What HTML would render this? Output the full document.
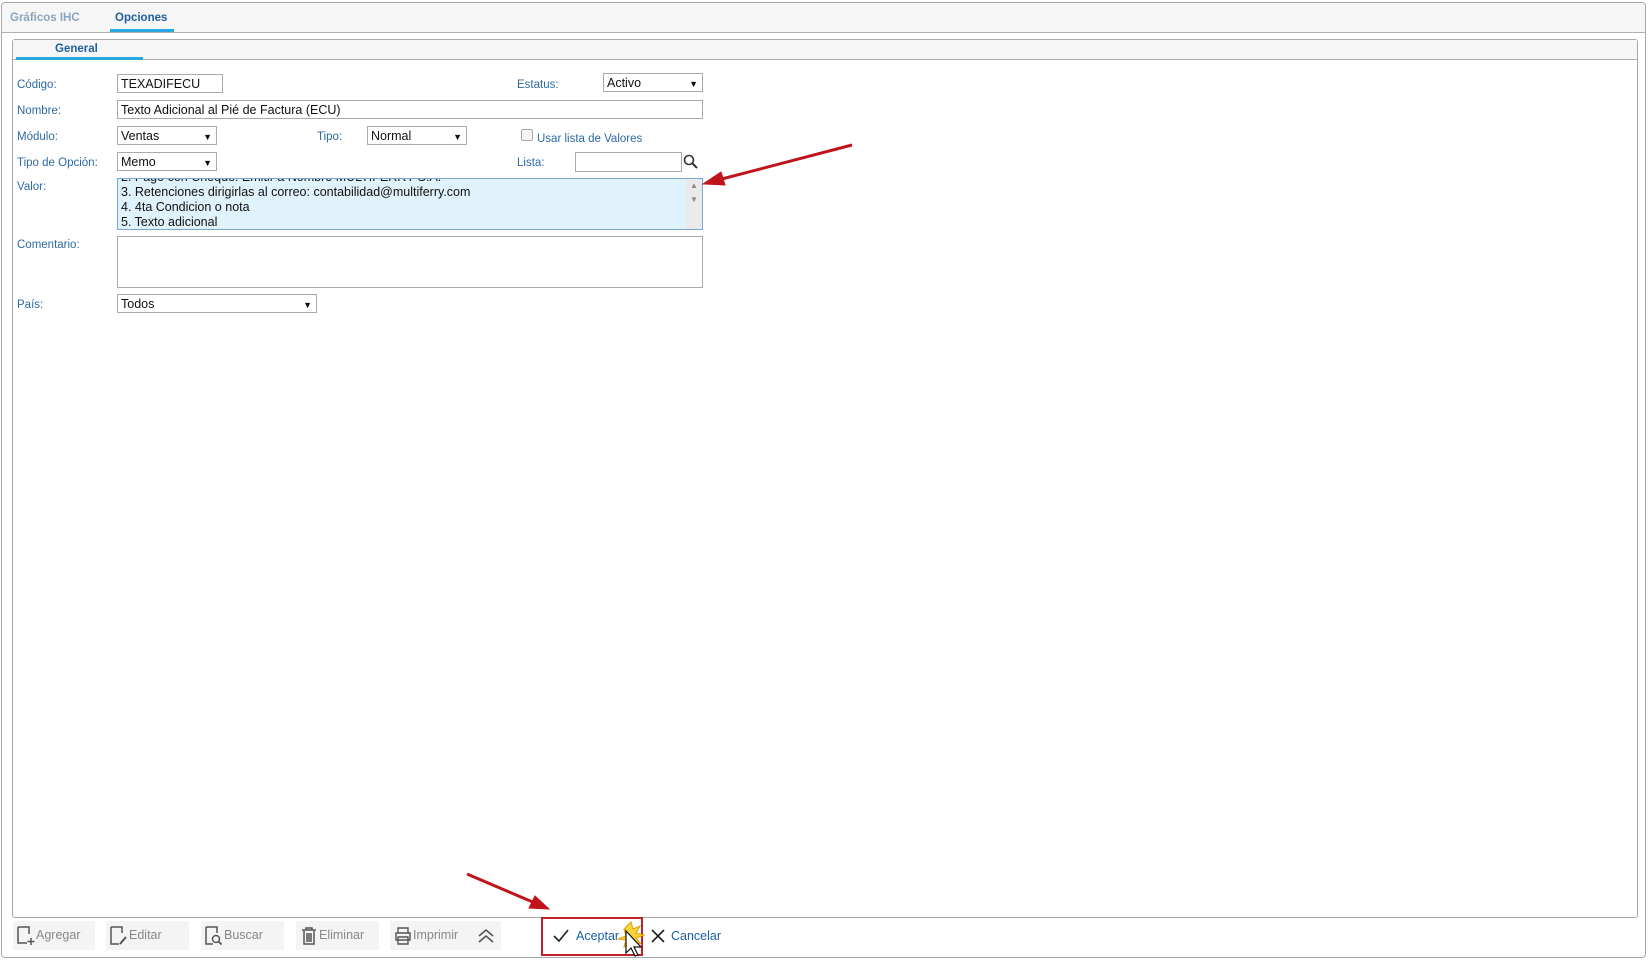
<!DOCTYPE html>
<html><head><meta charset="utf-8"><style>
*{box-sizing:border-box;margin:0;padding:0}
body{width:1650px;height:961px;background:#fff;font-family:"Liberation Sans","DejaVu Sans",sans-serif;position:relative;overflow:hidden}
.a{position:absolute}
.outer{left:1px;top:2px;width:1645px;height:956px;border:1px solid #a8a8a8;border-radius:4px;background:#fff}
.ohead{left:2px;top:3px;width:1643px;height:30px;background:#f6f6f6;border-bottom:1px solid #b0b0b0;border-radius:4px 4px 0 0}
.inner{left:12px;top:39px;width:1626px;height:879px;border:1px solid #a8a8a8;border-radius:3px}
.ihead{left:13px;top:40px;width:1624px;height:20px;background:#f6f6f6;border-bottom:1px solid #b0b0b0}
.lbl{font-size:11.5px;color:#2d6aa3}
.in{border:1px solid #aaa;height:19px;font-size:12.5px;color:#111;padding:1px 3px;background:#fff;line-height:16px}
.sel:after{content:"▼";position:absolute;right:4px;top:2px;font-size:9px}
.btn{top:921px;height:29px;background:#f4f4f4;font-size:12.5px;color:#888;line-height:29px}
.btn svg{position:absolute;left:3px;top:5px}
</style></head><body>
<div class="a outer"></div><div class="a ohead"></div>
<div class="a" style="left:10px;top:12px;font-size:11.5px;color:#8aa5be;font-weight:bold">Gráficos IHC</div>
<div class="a" style="left:115px;top:12px;font-size:11.5px;color:#1f5f9e;font-weight:bold">Opciones</div>
<div class="a" style="left:110px;top:29px;width:64px;height:3px;background:#29a8e0"></div>
<div class="a inner"></div><div class="a ihead"></div>
<div class="a" style="left:55px;top:43px;font-size:11.5px;color:#1f5f9e;font-weight:bold">General</div>
<div class="a" style="left:16px;top:57px;width:127px;height:3px;background:#29a8e0"></div>

<div class="a lbl" style="left:17px;top:79px">Código:</div>
<div class="a in" style="left:117px;top:74px;width:106px">TEXADIFECU</div>
<div class="a lbl" style="left:517px;top:79px">Estatus:</div>
<div class="a in sel" style="left:603px;top:73px;width:100px">Activo</div>

<div class="a lbl" style="left:17px;top:105px">Nombre:</div>
<div class="a in" style="left:117px;top:100px;width:586px">Texto Adicional al Pié de Factura (ECU)</div>

<div class="a lbl" style="left:17px;top:131px">Módulo:</div>
<div class="a in sel" style="left:117px;top:126px;width:100px">Ventas</div>
<div class="a lbl" style="left:317px;top:131px">Tipo:</div>
<div class="a in sel" style="left:367px;top:126px;width:100px">Normal</div>
<div class="a" style="left:521px;top:129px;width:12px;height:12px;border:1px solid #aaa;border-radius:2px;background:#f4f4f4"></div>
<div class="a lbl" style="left:537px;top:133px">Usar lista de Valores</div>

<div class="a lbl" style="left:17px;top:157px">Tipo de Opción:</div>
<div class="a in sel" style="left:117px;top:152px;width:100px">Memo</div>
<div class="a lbl" style="left:517px;top:157px">Lista:</div>
<div class="a in" style="left:575px;top:152px;width:107px;height:20px"></div>
<svg class="a" style="left:683px;top:154px" width="15" height="15"><circle cx="6" cy="6" r="4.5" fill="none" stroke="#333" stroke-width="1.6"/><path d="M9 9l5 5" stroke="#333" stroke-width="2"/></svg>

<div class="a lbl" style="left:17px;top:181px">Valor:</div>
<div class="a" style="left:117px;top:178px;width:586px;height:52px;border:1px solid #7aa7d8;background:#e0f2fb;overflow:hidden;font-size:12.5px;color:#111;line-height:15px;padding-left:3px">
<div style="margin-top:-9px">2. Pago con Cheque: Emitir a Nombre MULTIFERRY S.A.</div>
<div>3. Retenciones dirigirlas al correo: contabilidad@multiferry.com</div>
<div>4. 4ta Condicion o nota</div>
<div>5. Texto adicional</div>
<div class="a" style="right:0;top:0;width:16px;height:50px;background:#eaeaea;font-size:8px;color:#888;text-align:center;line-height:14px">▲<br>▼</div>
</div>

<div class="a lbl" style="left:17px;top:239px">Comentario:</div>
<div class="a" style="left:117px;top:236px;width:586px;height:52px;border:1px solid #aaa"></div>

<div class="a lbl" style="left:17px;top:299px">País:</div>
<div class="a in sel" style="left:117px;top:294px;width:200px">Todos</div>

<div class="a btn" style="left:13px;width:82px"><svg width="20" height="20"><path d="M2 1h11v7M2 1v16h9" fill="none" stroke="#555" stroke-width="1.5"/><path d="M15 12v7M11.5 15.5h7" stroke="#555" stroke-width="1.5"/></svg><span style="margin-left:23px">Agregar</span></div>
<div class="a btn" style="left:106px;width:83px"><svg width="20" height="20"><path d="M2 1h11v6M2 1v17h8" fill="none" stroke="#555" stroke-width="1.5"/><path d="M11 18l6-7" stroke="#555" stroke-width="2"/></svg><span style="margin-left:23px">Editar</span></div>
<div class="a btn" style="left:201px;width:83px"><svg width="20" height="20"><path d="M2 1h11v6M2 1v17h7" fill="none" stroke="#555" stroke-width="1.5"/><circle cx="12" cy="13" r="3.5" fill="none" stroke="#555" stroke-width="1.5"/><path d="M14.5 15.5l3 3" stroke="#555" stroke-width="1.8"/></svg><span style="margin-left:23px">Buscar</span></div>
<div class="a btn" style="left:296px;width:83px"><svg width="20" height="20"><path d="M3 4h14M7 4V2h6v2M5 5v13h10V5M8 7v9M10 7v9M12 7v9" fill="none" stroke="#555" stroke-width="1.5"/></svg><span style="margin-left:23px">Eliminar</span></div>
<div class="a btn" style="left:390px;width:111px"><svg width="20" height="20"><path d="M5 7V2h10v5M3 7h14v7H3zM5 11h10v7H5z" fill="none" stroke="#555" stroke-width="1.4"/></svg><span style="margin-left:23px">Imprimir</span><svg style="left:86px" width="20" height="20"><path d="M3 10l7-6 7 6M3 16l7-6 7 6" fill="none" stroke="#555" stroke-width="1.6"/></svg></div>

<div class="a" style="left:541px;top:917px;width:102px;height:39px;border:2px solid #c0202a"></div>
<svg class="a" style="left:552px;top:928px" width="18" height="16"><path d="M2 8l5 5 9-11" fill="none" stroke="#222" stroke-width="1.6"/></svg>
<div class="a" style="left:576px;top:929px;font-size:12.5px;color:#1a5fa8">Aceptar</div>
<svg class="a" style="left:614px;top:915px" width="34" height="44"><path d="M10 14l7-7 2 7 7-3-4 7 8 2-8 3 5 6-7-2-1 8-3-7-6 4 2-7-8-1 8-3z" fill="#f8d43a" stroke="#e0a000" stroke-width="1"/><path d="M12 16v22l5-5 4 8 3-1-4-8h7z" fill="#fff" stroke="#111" stroke-width="1.2"/></svg>
<svg class="a" style="left:650px;top:928px" width="16" height="16"><path d="M2 2l12 12M14 2L2 14" stroke="#222" stroke-width="1.6"/></svg>
<div class="a" style="left:671px;top:929px;font-size:12.5px;color:#1a5fa8">Cancelar</div>

<svg class="a" style="left:0;top:0" width="1650" height="961"><g fill="#c0141c" stroke="#c0141c">
<path d="M852 145L718 180" stroke-width="3"/><path d="M703 184l18-12 4 13z" stroke-width="1"/>
<path d="M467 874L535 903" stroke-width="3"/><path d="M549 909l-20-1 6-12z" stroke-width="1"/></g></svg>
</body></html>
